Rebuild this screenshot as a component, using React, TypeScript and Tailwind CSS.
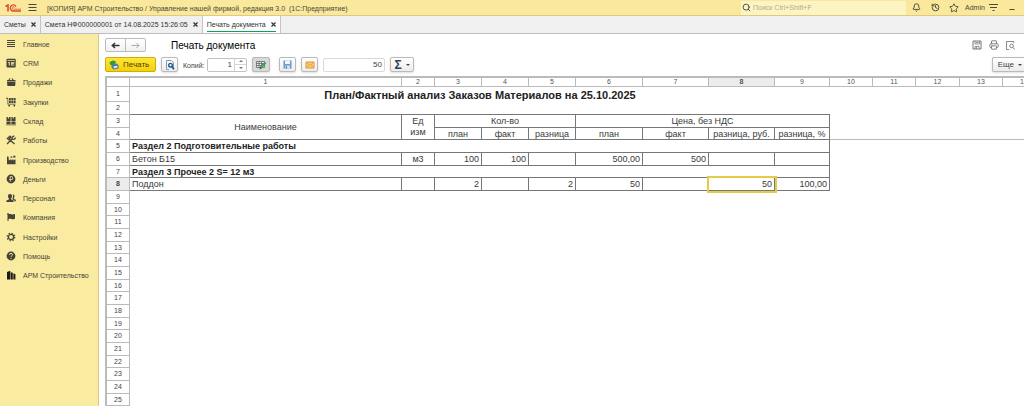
import type { ReactNode } from "react";
import clsx from "clsx";
import { Bell, History, Printer, Search, Star } from "lucide-react";
import { FaFlag } from "react-icons/fa";

const SHEET_COLS = [272, 33, 47, 47, 47, 67, 66, 66, 55, 43, 43, 44, 43, 43];

const TABS = [
  { title: "Сметы", active: false },
  { title: "Смета НФ000000001 от 14.08.2025 15:26:05", active: false },
  { title: "Печать документа", active: true },
];

function Glyph({ children }: { children: ReactNode }) {
  return (
    <svg viewBox="0 0 10 10" className="size-[10px]" fill="currentColor" aria-hidden="true">
      {children}
    </svg>
  );
}

const SECTIONS: { title: string; icon: ReactNode }[] = [
  {
    title: "Главное",
    icon: (
      <Glyph>
        <path d="M1 1h8v1H1zM1 3h8v1H1zM1 5h8v1H1zM1 7h8v1H1z" />
      </Glyph>
    ),
  },
  {
    title: "CRM",
    icon: (
      <Glyph>
        <path
          fillRule="evenodd"
          d="M1.5.8h7.2q1 0 1 1v6.6q0 1-1 1H1.5q-1 0-1-1V1.8q0-1 1-1zM1.5 2.3v.6h7.2v-.6zM2 4v.8h.8v2.8h1V4zM5.2 4v3.600h3.300v-.8H6.400v-.8h1.800v-.7H6.400v-.5h2.100V4z"
        />
      </Glyph>
    ),
  },
  {
    title: "Продажи",
    icon: (
      <Glyph>
        <path d="M1 3h1.500L3.500 1.200h.9L3.700 3h2.700L5.700 1.200h.9L7.600 3H9.500v1.500H1zM1 5h8.500l-.4 4H1.400z" />
      </Glyph>
    ),
  },
  {
    title: "Закупки",
    icon: (
      <Glyph>
        <path d="M0 .8h1.800l.5 1.300v4.600H9.500v.9H1.500V1.800H0zM3 1h1.800v2.300H3zM5.300 1h1.900v2.300H5.300zM7.700 1h1.900v2.300H7.700zM3 3.800h1.800v2.200H3zM5.300 3.800h1.900v2.200H5.300zM7.700 3.800h1.900v2.200H7.700z" />
        <circle cx="3.200" cy="8.700" r=".9" />
        <circle cx="8.300" cy="8.700" r=".9" />
      </Glyph>
    ),
  },
  {
    title: "Склад",
    icon: (
      <Glyph>
        <path d="M.5 1h1.400v1.400h1V1h1.700v4H.5zM5.400 1h1.400v1.400h1V1h1.700v4H5.400zM.5 5.600h4.100V8H.5zM5.400 5.600h4.100V8H5.400zM0 8.400h10v.9H0z" />
      </Glyph>
    ),
  },
  {
    title: "Работы",
    icon: (
      <Glyph>
        <g fill="none" stroke="currentColor" strokeWidth="1.300">
          <path d="M1 9l5-5M3.500 4.500l5 4.500M.8 4L4 1.200l1 1.300-3 2.500" />
          <path d="M8.300.8L6.200 2.200v2l2 .2L9.700 2.600" />
        </g>
      </Glyph>
    ),
  },
  {
    title: "Производство",
    icon: (
      <Glyph>
        <path d="M1 9.300V1.500h1.500L2.900 5.500l2.300-1.600v1.600l2.200-1.600v1.600l2.100-1.200v5zM4.500 1.500h1.800v1.200H4.500zM7.200.8h2.200v1.600H7.200z" />
      </Glyph>
    ),
  },
  {
    title: "Деньги",
    icon: (
      <Glyph>
        <path
          fillRule="evenodd"
          d="M5 .6a4.400 4.400 0 1 1 0 8.800A4.400 4.400 0 0 1 5 .6zM3.800 2.300v3h-.7v.7h.7v1.700h.8V6h1q1.600-.1 1.600-1.800T5.600 2.300zM4.600 3h.9q.9 0 .9 1.150t-.9 1.150h-.9z"
        />
      </Glyph>
    ),
  },
  {
    title: "Персонал",
    icon: (
      <Glyph>
        <path d="M4 1c1.300 0 2 .9 2 2.200 0 1-.4 1.900-1 2.300v.7l2.200 1Q7.700 7.500 7.700 9H.3q0-1.500.6-1.800l2.200-1v-.7C2.400 5.100 2 4.200 2 3.200 2 1.900 2.700 1 4 1z" />
        <path d="M6.700 1.500c1.100-.1 1.800.6 1.800 1.700 0 .8-.2 1.400-.7 1.800v.7l1.600.8q.5.4.5 1.800H8.400q0-1-.7-1.400L6.200 6q.8-1.400.8-2.800 0-1-.3-1.700z" />
      </Glyph>
    ),
  },
  { title: "Компания", icon: <FaFlag className="size-[8px]" /> },
  {
    title: "Настройки",
    icon: (
      <Glyph>
        <g fill="none" stroke="currentColor">
          <circle cx="5" cy="5" r="2.600" strokeWidth="1.300" />
          <circle cx="5" cy="5" r="3.800" strokeWidth="1.200" strokeDasharray="1.400 1.585" />
        </g>
      </Glyph>
    ),
  },
  {
    title: "Помощь",
    icon: (
      <Glyph>
        <circle cx="5" cy="5" r="4.400" />
        <path d="M3.500 3.900q0-1.500 1.500-1.500t1.500 1.300q0 .7-.8 1.200T5 6.100" fill="none" stroke="#f9eb9f" />
        <circle cx="5" cy="7.500" r=".6" fill="#f9eb9f" />
      </Glyph>
    ),
  },
  {
    title: "АРМ Строительство",
    icon: (
      <Glyph>
        <path className="fill-[#1c1b16]" d="M1 2L4.300.8v8.700H1zM4.800 2.300l2 .5v6.700h-2zM7.400 3.500l2 .5v5.500h-2z" />
      </Glyph>
    ),
  },
];

function DownArrow() {
  return (
    <svg viewBox="0 0 4 2" className="h-[2px] w-[4px]" fill="#444" aria-hidden="true">
      <path d="M0 0h4L2 2z" />
    </svg>
  );
}

function ToolButton({
  label,
  className,
  children,
}: {
  label: string;
  className: string;
  children: ReactNode;
}) {
  return (
    <button
      aria-label={label}
      className={clsx(
        "flex h-[15px] shrink-0 items-center justify-center rounded-[2px] border border-[#b9b9b9] shadow-sm",
        className
      )}
    >
      {children}
    </button>
  );
}

function TitleBar() {
  return (
    <header className="flex h-4 items-center border-b border-[#dccb80] bg-[#fae99c] text-[#4b4739]">
      <svg viewBox="0 0 16 8" className="ml-[5px] h-[8px] w-4" fill="none" stroke="#dc4a35" aria-label="1С">
        <path d="M.5 2.500L3 1v6.500" strokeWidth="1.600" />
        <path d="M11 2.800A3 3 0 1 0 8.300 7H16" strokeWidth="1.300" />
        <path d="M9.500 3.600A1.200 1.200 0 1 0 8.500 5.200H16" strokeWidth=".8" />
      </svg>
      <button aria-label="Главное меню" className="ml-[7px]">
        <svg viewBox="0 0 9 9" className="size-[9px]" stroke="currentColor" aria-hidden="true">
          <path d="M.5 1.500h8M.5 4.500h8M.5 7.500h8" />
        </svg>
      </button>
      <h1 className="ml-[10px] pt-[2px] text-[7px] leading-[9px] whitespace-pre">
        [КОПИЯ] АРМ Строительство / Управление нашей фирмой, редакция 3.0  (1С:Предприятие)
      </h1>
      <label className="ml-auto flex h-[14px] w-[165px] items-center gap-[2px] bg-[#fdf4c4] pl-px">
        <Search className="size-[9px]" strokeWidth={2.5} />
        <input
          aria-label="Поиск"
          placeholder="Поиск Ctrl+Shift+F"
          className="min-w-0 flex-1 pt-px text-[7px] outline-none placeholder:text-[#b3ac86]"
        />
      </label>
      <div className="ml-[6px] flex items-center">
        <button aria-label="Уведомления"><Bell className="size-[9px]" strokeWidth={2.5} /></button>
        <button aria-label="История" className="ml-[10px]"><History className="size-[9px]" strokeWidth={2.5} /></button>
        <button aria-label="Избранное" className="ml-[9px]"><Star className="size-[10px]" strokeWidth={2.2} /></button>
        <button className="ml-[6px] w-[18px] text-[7px] leading-[9px]">Admin</button>
        <button aria-label="Настройки окна" className="ml-[6px]">
          <svg viewBox="0 0 9 9" className="size-[9px]" stroke="currentColor" aria-hidden="true">
            <path d="M0 1.500h9M1 4.500h7M3.500 7.500h2" />
          </svg>
        </button>
        <button aria-label="Свернуть" className="mr-[9px] ml-[11px]">
          <svg viewBox="0 0 6 9" className="h-[9px] w-[6px]" stroke="currentColor" aria-hidden="true">
            <path d="M.5 6.500h5" />
          </svg>
        </button>
      </div>
    </header>
  );
}

function TabBar() {
  return (
    <nav className="flex h-[18px] border-b border-[#bdbdbd] bg-[#f0f0f0] text-[7px] leading-[9px] text-[#333]">
      {TABS.map((tab) => (
        <div
          key={tab.title}
          className={clsx("flex border-r border-[#c4c4c4] px-[4px] pb-px", tab.active && "bg-white")}
        >
          <div
            className={clsx(
              "flex items-center gap-[5px] border-b pt-px",
              tab.active ? "border-[#0fa05c]" : "border-transparent"
            )}
          >
            <a href="#" className="pt-px whitespace-nowrap">{tab.title}</a>
            <button aria-label={`Закрыть ${tab.title}`}>
              <svg viewBox="0 0 5 5" className="size-[5px]" stroke="currentColor" strokeWidth="1.200" aria-hidden="true">
                <path d="M.5.5l4 4M4.500.5l-4 4" />
              </svg>
            </button>
          </div>
        </div>
      ))}
    </nav>
  );
}

function Sidebar() {
  return (
    <aside className="w-[99px] shrink-0 border-r border-[#d6c98c] bg-[#f9eb9f]">
      <ul className="flex h-[251px] flex-col text-[7px] leading-[9px] text-[#46443a]">
        {SECTIONS.map((section) => (
          <li key={section.title} className="flex flex-1 items-center">
            <a href="#" className="flex items-center gap-[7px] pl-[6px] whitespace-nowrap">
              <span className="flex w-[10px] justify-center">{section.icon}</span>
              <span className="pt-px">{section.title}</span>
            </a>
          </li>
        ))}
      </ul>
    </aside>
  );
}

function Toolbar() {
  return (
    <div className="pl-[6px] text-[8px] text-[#444]">
      <div className="flex h-[22px] items-center">
        <div className="flex h-[14px] w-[41px] rounded-[2px] border border-[#bcbcbc] bg-gradient-to-b from-white to-[#f1f1f1]">
          <button aria-label="Назад" className="flex flex-1 items-center justify-center border-r border-[#bcbcbc]">
            <svg viewBox="0 0 9 7" className="h-[7px] w-[9px]" fill="none" stroke="#333" strokeWidth="1.500" aria-hidden="true">
              <path d="M8.500 3.500H1.500M4 1L1.300 3.500 4 6" />
            </svg>
          </button>
          <button aria-label="Вперед" className="flex flex-1 items-center justify-center">
            <svg viewBox="0 0 9 7" className="h-[7px] w-[9px]" fill="none" stroke="#aaa" aria-hidden="true">
              <path d="M.5 3.500h7.500M5.500 1L8 3.500 5.500 6" />
            </svg>
          </button>
        </div>
        <h2 className="ml-[25px] text-[10px] text-black">Печать документа</h2>
        <div className="mr-[9px] ml-auto flex items-center gap-[7px] text-[#777]">
          <button aria-label="Сохранить">
            <svg viewBox="0 0 10 10" className="size-[10px]" fill="none" stroke="currentColor" aria-hidden="true">
              <path d="M1 1h8v8H1z" />
              <path d="M3 1v3h4.500V1M3 9V6.500h4V9M4.500 7v2M4 2.500h2.500" strokeWidth=".8" />
            </svg>
          </button>
          <button aria-label="Напечатать"><Printer className="size-[10px]" strokeWidth={2.2} /></button>
          <button aria-label="Просмотр">
            <svg viewBox="0 0 10 10" className="size-[9px]" fill="none" stroke="currentColor" aria-hidden="true">
              <path d="M3.500 9.500h-3v-9h8v2" />
              <circle cx="6.200" cy="5.500" r="2" />
              <path d="M7.600 7l2 2.500" />
            </svg>
          </button>
        </div>
      </div>
      <div className="flex h-[17px] items-center">
        <button className="flex h-[15px] w-[51px] items-center gap-[4px] rounded-[2px] border border-[#c9ad17] bg-gradient-to-b from-[#ffe733] to-[#f5d000] pl-[3px] text-[#4b3f08]">
          <svg viewBox="0 0 10 10" className="size-[10px]" aria-hidden="true">
            <path fill="#2f9a48" d="M.5 2L4 .5 7 1.500 6 4.500l-3.500.8L1 4.500z" />
            <path fill="#4b7f9c" d="M2.500 4.500L8 3.500l1.800 2.300-.3 2.700-5 1L2.500 7.500z" />
            <path fill="#e6f3fa" d="M4.500 6.500l3.700-.7.300 1.700-3.500.8z" />
          </svg>
          Печать
        </button>
        <ToolButton label="Предварительный просмотр" className="ml-[5px] w-[17px] bg-gradient-to-b from-white to-[#ececec]">
          <svg viewBox="0 0 10 10" className="size-[10px]" fill="none" aria-hidden="true">
            <path d="M4 9.500H1.500v-9h5l2 2v7" stroke="#8d9aa6" />
            <circle cx="5.500" cy="5.200" r="1.800" stroke="#1b5c92" strokeWidth="1.400" />
            <path d="M6.700 6.600L9 9.300" stroke="#1b5c92" strokeWidth="1.600" />
          </svg>
        </ToolButton>
        <label htmlFor="copies" className="ml-[5px] w-[24px] pt-px text-[7px] leading-[9px]">Копий:</label>
        <div className="flex h-[14px] w-[40px] rounded-[2px] border border-[#c2c2c2] bg-white">
          <input id="copies" defaultValue="1" className="w-[27px] border-r border-[#d5d5d5] pr-[2px] text-right outline-none" />
          <div className="flex flex-1 flex-col">
            <button aria-label="Больше" className="flex flex-1 items-center justify-center border-b border-[#d5d5d5]">
              <svg viewBox="0 0 4 2" className="h-[2px] w-[4px]" fill="#777" aria-hidden="true"><path d="M0 2L2 0l2 2z" /></svg>
            </button>
            <button aria-label="Меньше" className="flex flex-1 items-center justify-center">
              <svg viewBox="0 0 4 2" className="h-[2px] w-[4px]" fill="#777" aria-hidden="true"><path d="M0 0l2 2 2-2z" /></svg>
            </button>
          </div>
        </div>
        <ToolButton label="Редактирование" className="ml-[5px] w-[18px] bg-[#d9d9d9]">
          <svg viewBox="0 0 12 10" className="h-[10px] w-[12px]" aria-hidden="true">
            <path d="M1.500 1.500h8v6h-8zM1.500 3.500h8M1.500 5.500h8M4 1.500v6M6.500 1.500v6" fill="#eee" stroke="#666" strokeWidth=".8" />
            <path d="M10.500 2.500L6 7.500" stroke="#34a257" strokeWidth="2.400" />
            <path d="M5 6.800L6.800 8.400 4.600 9.200z" fill="#444" />
          </svg>
        </ToolButton>
        <ToolButton label="Сохранить файл" className="ml-[9px] w-[17px] bg-gradient-to-b from-white to-[#ececec]">
          <svg viewBox="0 0 10 10" className="size-[9px]" aria-hidden="true">
            <path fill="#6f9bc8" d="M.5.5h9v9h-9z" />
            <path fill="#eef5fb" d="M2.200.5h5.600v4H2.200z" />
            <path fill="#dfe9f2" d="M2.500 6.200h5v3.300h-5z" />
            <path fill="#47719c" d="M3.200 7h1.300v2.500H3.200z" />
          </svg>
        </ToolButton>
        <ToolButton label="Отправить" className="ml-[5px] w-[17px] bg-gradient-to-b from-white to-[#ececec]">
          <svg viewBox="0 0 10 8" className="h-[8px] w-[10px]" fill="#f7c978" stroke="#e09a35" aria-hidden="true">
            <path d="M1 1h8v6H1z" />
            <path d="M1.500 1.500L5 4.500l3.500-3M1.500 6.500l2.300-2M8.500 6.500l-2.300-2" fill="none" strokeWidth=".7" />
          </svg>
        </ToolButton>
        <input
          aria-label="Сумма выделенных ячеек"
          readOnly
          value="50"
          className="ml-[5px] h-[14px] w-[62px] rounded-[2px] border border-[#dadada] px-[2px] text-right outline-none"
        />
        <ToolButton label="Сумма" className="ml-[5px] w-[24px] gap-[4px] bg-gradient-to-b from-white to-[#ececec]">
          <span className="text-[12px] leading-none font-bold text-[#2d4256]">Σ</span>
          <DownArrow />
        </ToolButton>
        <button className="ml-auto flex h-[15px] w-[32px] items-center justify-end gap-[4px] rounded-l-[2px] border border-r-0 border-[#b9b9b9] bg-gradient-to-b from-white to-[#ececec] pr-[2px] shadow-sm">
          Еще
          <DownArrow />
        </button>
      </div>
    </div>
  );
}

function RowHead({ n }: { n: number }) {
  return (
    <th
      scope="row"
      className={clsx(
        "border-r border-b border-[#bbb] p-0 text-center text-[7px] leading-[8px] text-[#444]",
        n === 8 ? "bg-[#ececec] font-bold" : "font-normal"
      )}
    >
      {n}
    </th>
  );
}

function Cell({
  children,
  span,
  rows,
  className,
}: {
  children?: ReactNode;
  span?: number;
  rows?: number;
  className?: string;
}) {
  return (
    <td
      colSpan={span}
      rowSpan={rows}
      className={clsx("border-r border-b border-[#777] px-[2px] py-0 whitespace-nowrap", className)}
    >
      {children}
    </td>
  );
}

function Sheet() {
  const emptyRows = Array.from({ length: 17 }, (_, i) => i + 9);
  return (
    <div className="ml-[6px] flex-1 overflow-hidden border-t-2 border-l-2 border-[#bbb]">
      <table className="w-px table-fixed border-separate border-spacing-0 text-[9px] leading-[10px] text-[#3a3a3a]">
        <colgroup>
          <col className="w-[23px]" />
          {SHEET_COLS.map((width, i) => (
            <col key={i} style={{ width }} />
          ))}
        </colgroup>
        <thead>
          <tr className="h-[9px] text-[7px] leading-[8px] text-[#555]">
            <td className="border-r border-b border-[#bbb] p-0" />
            {SHEET_COLS.map((_, i) => (
              <th
                key={i}
                scope="col"
                className={clsx(
                  "border-r border-b border-[#bbb] p-0",
                  i === 7 ? "bg-[#ececec] font-bold" : "font-normal"
                )}
              >
                {i + 1}
              </th>
            ))}
          </tr>
        </thead>
        <tbody>
          <tr className="h-[15px]">
            <RowHead n={1} />
            <td colSpan={9} className="p-0 text-center text-[11px] leading-[12px] font-bold text-[#222]">
              План/Фактный анализ Заказов Материалов на 25.10.2025
            </td>
          </tr>
          <tr className="h-[13px]">
            <RowHead n={2} />
            <td colSpan={9} className="border-b border-[#777] p-0" />
          </tr>
          <tr className="h-[13px] text-center">
            <RowHead n={3} />
            <Cell rows={2}>Наименование</Cell>
            <Cell rows={2} className="leading-[11px]">Ед<br />изм</Cell>
            <Cell span={3}>Кол-во</Cell>
            <Cell span={4}>Цена, без НДС</Cell>
          </tr>
          <tr className="h-[12px] text-center">
            <RowHead n={4} />
            <Cell>план</Cell>
            <Cell>факт</Cell>
            <Cell>разница</Cell>
            <Cell>план</Cell>
            <Cell>факт</Cell>
            <Cell>разница, руб.</Cell>
            <Cell>разница, %</Cell>
            <td colSpan={5} className="border-b border-[#bbb] p-0" />
          </tr>
          <tr className="h-[13px]">
            <RowHead n={5} />
            <Cell span={9} className="font-bold text-[#222]">Раздел 2 Подготовительные работы</Cell>
          </tr>
          <tr className="h-[13px] text-right">
            <RowHead n={6} />
            <Cell className="text-left">Бетон Б15</Cell>
            <Cell className="text-center">м3</Cell>
            <Cell>100</Cell>
            <Cell>100</Cell>
            <Cell />
            <Cell>500,00</Cell>
            <Cell>500</Cell>
            <Cell />
            <Cell />
          </tr>
          <tr className="h-[12px]">
            <RowHead n={7} />
            <Cell span={9} className="font-bold text-[#222]">Раздел 3 Прочее 2 S= 12 м3</Cell>
          </tr>
          <tr className="h-[13px] text-right">
            <RowHead n={8} />
            <Cell className="text-left">Поддон</Cell>
            <Cell />
            <Cell>2</Cell>
            <Cell />
            <Cell>2</Cell>
            <Cell>50</Cell>
            <Cell />
            <Cell className="outline-2 outline-[#e3cc4a]">50</Cell>
            <Cell>100,00</Cell>
          </tr>
          {emptyRows.map((n) => (
            <tr key={n} className={n % 3 === 1 ? "h-[12px]" : "h-[13px]"}>
              <RowHead n={n} />
            </tr>
          ))}
        </tbody>
      </table>
    </div>
  );
}

export default function App() {
  return (
    <div className="flex h-screen flex-col overflow-hidden bg-white font-['Liberation_Sans',Arial,sans-serif]">
      <TitleBar />
      <TabBar />
      <div className="flex min-h-0 flex-1">
        <Sidebar />
        <main className="flex min-w-0 flex-1 flex-col">
          <Toolbar />
          <div className="h-[3px]" />
          <Sheet />
        </main>
      </div>
    </div>
  );
}
